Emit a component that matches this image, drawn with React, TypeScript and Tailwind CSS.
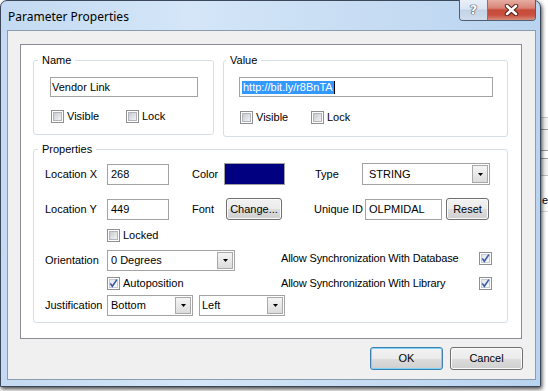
import React from "react";

function Check({ checked = false }: { checked?: boolean }) {
  return (
    <span className="relative flex h-[13px] w-[13px] shrink-0 border border-[#8e8f8f] bg-white p-[1px]">
      <span
        className={
          checked
            ? "h-full w-full border border-[#c6cbd3] bg-gradient-to-br from-[#e2e5ea] to-[#fbfbfc]"
            : "h-full w-full border border-[#b1b5bb] bg-gradient-to-br from-[#c8cbd0] to-[#f3f3f4]"
        }
      />
      {checked && (
        <svg className="absolute left-0 top-0" width="11" height="11" viewBox="0 0 11 11">
          <path d="M2.3 5.4 L4.3 8.3 L8.9 1.6" fill="none" stroke="#3a5aa8" strokeWidth="1.6" />
        </svg>
      )}
    </span>
  );
}

function CheckLabel({ label, checked = false, className = "" }: { label: string; checked?: boolean; className?: string }) {
  return (
    <div className={"flex items-center gap-[3px] " + className}>
      <Check checked={checked} />
      <span className="leading-[13px]">{label}</span>
    </div>
  );
}

function Field({ value, className = "", textClass = "pl-[3px]" }: { value: string; className?: string; textClass?: string }) {
  return (
    <div className={"flex items-center border border-[#a3a3a3] bg-white " + className}>
      <span className={"leading-[13px] " + textClass}>{value}</span>
    </div>
  );
}

function Combo({ value, className = "", textClass = "pl-[3px]" }: { value: string; className?: string; textClass?: string }) {
  return (
    <div className={"flex border border-[#a3a3a3] bg-white " + className}>
      <span className={"flex-1 self-center leading-[13px] " + textClass}>{value}</span>
      <span className="m-[1px] flex w-[16px] items-center justify-center border border-[#a9a9a9] bg-gradient-to-b from-[#f5f5f5] to-[#dcdcdc]">
        <svg width="5" height="3" viewBox="0 0 5 3">
          <path d="M0 0h5L2.5 3z" fill="#000" />
        </svg>
      </span>
    </div>
  );
}

function Btn({ label, className = "", def = false }: { label: string; className?: string; def?: boolean }) {
  return (
    <div
      className={
        "flex items-center justify-center rounded-[3px] border leading-[13px] bg-[linear-gradient(180deg,#f2f2f2_0%,#ebebeb_50%,#dddddd_51%,#cfcfcf_100%)] " +
        (def
          ? "border-[#3c7fb1] shadow-[inset_0_0_0_1px_#7fd3f7] "
          : "border-[#707070] shadow-[inset_0_0_0_1px_#fbfbfb] ") +
        className
      }
    >
      {label}
    </div>
  );
}

function Legend({ text, className = "ml-[4px]" }: { text: string; className?: string }) {
  return <div className={"-mt-[7px] self-start bg-white px-[4px] leading-[13px] " + className}>{text}</div>;
}

export default function App() {
  return (
    <div className="flex h-[391px] w-[548px] overflow-hidden bg-white font-['Liberation_Sans',Arial,sans-serif] text-[11px] text-black">
      {/* dialog window */}
      <div className="relative z-10 flex h-[387px] w-[541px] shrink-0 flex-col rounded-t-[7px] border border-[#3b4859] bg-[linear-gradient(90deg,#c3daf2_0%,#d4e6f8_35%,#c8ddf3_65%,#b9d4f0_100%)] pb-[6px] pl-[6px] pr-[4px] shadow-[1px_2px_4px_rgba(0,0,0,0.75)]">
        {/* title bar */}
        <div className="flex h-[29px] items-start justify-between">
          <span className="mt-[9px] pl-[1px] font-['Noto_Sans',sans-serif] text-[12px] leading-[14px] text-black">
            Parameter Properties
          </span>
          <div className="-mt-[1px] flex h-[21px] overflow-hidden rounded-b-[4px] border border-t-0 border-[#4f5f74]">
            <div className="flex w-[28px] items-center justify-center border-r border-[#6d7c90] bg-[linear-gradient(180deg,#e8eff7_0%,#dbe5f1_45%,#c3d3e6_50%,#cfdcec_100%)]">
              <span className="font-['DejaVu_Sans',sans-serif] text-[13px] font-bold leading-[14px] text-white [text-shadow:0_0_1px_#2d3b4d,0_0_1px_#2d3b4d,0_0_1px_#2d3b4d]">
                ?
              </span>
            </div>
            <div className="flex w-[47px] items-center justify-center bg-[linear-gradient(180deg,#e6ada3_0%,#d98476_40%,#c54b3b_50%,#c94f3f_75%,#d98c7c_100%)]">
              <svg width="15" height="12" viewBox="0 0 15 12">
                <path d="M3 2 L12 10 M12 2 L3 10" stroke="#4a1a14" strokeWidth="4.4" strokeLinecap="round" fill="none" />
                <path d="M3 2 L12 10 M12 2 L3 10" stroke="#ffffff" strokeWidth="2.6" strokeLinecap="round" fill="none" />
              </svg>
            </div>
          </div>
        </div>

        {/* client area */}
        <div className="flex flex-1 flex-col border border-[#8b9cb0] bg-[#f0f0f0]">
          <div className="ml-[12px] mt-[13px] h-[295px] w-[502px] border border-[#898c95] bg-white px-[12px] pt-[15px]">
            {/* Name / Value */}
            <div className="flex items-start gap-[9px]">
              <div className="flex h-[75px] w-[181px] flex-col rounded-[3px] border border-[#d5dfe5]">
                <Legend text="Name" />
                <Field value="Vendor Link" className="ml-[16px] mt-[10px] h-[20px] w-[148px]" textClass="pl-[1px]" />
                <div className="ml-[17px] mt-[13px] flex">
                  <CheckLabel label="Visible" className="w-[75px]" />
                  <CheckLabel label="Lock" />
                </div>
              </div>
              <div className="flex h-[77px] w-[285px] flex-col rounded-[3px] border border-[#d5dfe5]">
                <Legend text="Value" className="ml-[2px]" />
                <div className="ml-[15px] mt-[10px] flex h-[20px] w-[254px] items-center border border-[#a3a3a3] bg-white pl-[2px]">
                  <span className="bg-[#3399ff] px-[1px] leading-[13px] text-white">http://bit.ly/r8BnTA</span>
                  <span className="h-[13px] w-[1px] bg-black" />
                </div>
                <div className="ml-[16px] mt-[14px] flex">
                  <CheckLabel label="Visible" className="w-[71px]" />
                  <CheckLabel label="Lock" />
                </div>
              </div>
            </div>

            {/* Properties */}
            <div className="mt-[12px] flex h-[174px] w-[475px] flex-col rounded-[3px] border border-[#d5dfe5] pl-[11px]">
              <Legend text="Properties" className="-ml-[7px]" />

              <div className="mt-[7px] flex h-[22px] items-center">
                <span className="w-[62px] leading-[13px]">Location X</span>
                <Field value="268" className="h-[21px] w-[62px]" />
                <span className="ml-[23px] w-[32px] leading-[13px]">Color</span>
                <div className="h-[22px] w-[61px] border border-[#a0a0a0] bg-[#000080]" />
                <span className="ml-[30px] w-[47px] leading-[13px]">Type</span>
                <Combo value="STRING" className="h-[22px] w-[128px]" textClass="pl-[6px]" />
              </div>

              <div className="mt-[13px] flex h-[22px] items-center">
                <span className="w-[62px] leading-[13px]">Location Y</span>
                <Field value="449" className="h-[21px] w-[62px] self-end" />
                <span className="ml-[23px] w-[34px] leading-[13px]">Font</span>
                <Btn label="Change..." className="h-[22px] w-[56px]" />
                <span className="ml-[32px] w-[51px] leading-[13px]">Unique ID</span>
                <Field value="OLPMIDAL" className="h-[21px] w-[77px] self-end" textClass="pl-[3px]" />
                <Btn label="Reset" className="ml-[4px] h-[22px] w-[43px]" />
              </div>

              <div className="ml-[62px] mt-[9px] flex">
                <CheckLabel label="Locked" />
              </div>

              <div className="mt-[8px] flex h-[21px] items-center">
                <span className="w-[62px] leading-[13px]">Orientation</span>
                <Combo value="0 Degrees" className="h-[21px] w-[128px]" />
                <span className="ml-[46px] w-[198px] self-start pt-[2px] leading-[13px] tracking-[-0.15px]">
                  Allow Synchronization With Database
                </span>
                <div className="mt-[2px] self-start">
                  <Check checked />
                </div>
              </div>

              <div className="mt-[6px] flex h-[13px] items-center">
                <CheckLabel label="Autoposition" checked className="ml-[62px] w-[174px]" />
                <span className="w-[198px] leading-[13px] tracking-[-0.15px]">Allow Synchronization With Library</span>
                <Check checked />
              </div>

              <div className="mt-[5px] flex h-[21px] items-center">
                <span className="w-[62px] leading-[13px]">Justification</span>
                <Combo value="Bottom" className="h-[21px] w-[86px]" textClass="pl-[3px]" />
                <Combo value="Left" className="ml-[6px] h-[21px] w-[86px]" textClass="pl-[2px]" />
              </div>
            </div>
          </div>

          {/* OK / Cancel */}
          <div className="mt-[8px] flex justify-end gap-[7px] pr-[12px]">
            <Btn label="OK" def className="h-[23px] w-[73px]" />
            <Btn label="Cancel" className="h-[23px] w-[73px]" />
          </div>
        </div>
      </div>

      {/* window behind, visible at the right edge */}
      <div className="flex flex-1 flex-col bg-white">
        <div className="h-[118px] border-b border-[#c8c8c8]" />
        <div className="h-[12px] border-b border-[#9a9a9a] bg-[#f2f2f2]" />
        <div className="h-[21px] border-b border-[#9a9a9a] bg-[#f2f2f2]" />
        <div className="h-[8px] border-b border-[#9a9a9a]" />
        <div className="h-[17px] border-b border-[#c0c0c0] bg-[#f2f2f2]" />
        <div className="mt-[18px] pl-[1px] leading-[13px]">e</div>
        <div className="mt-[4px] h-[1px] bg-[#d8d8d8]" />
      </div>
    </div>
  );
}
